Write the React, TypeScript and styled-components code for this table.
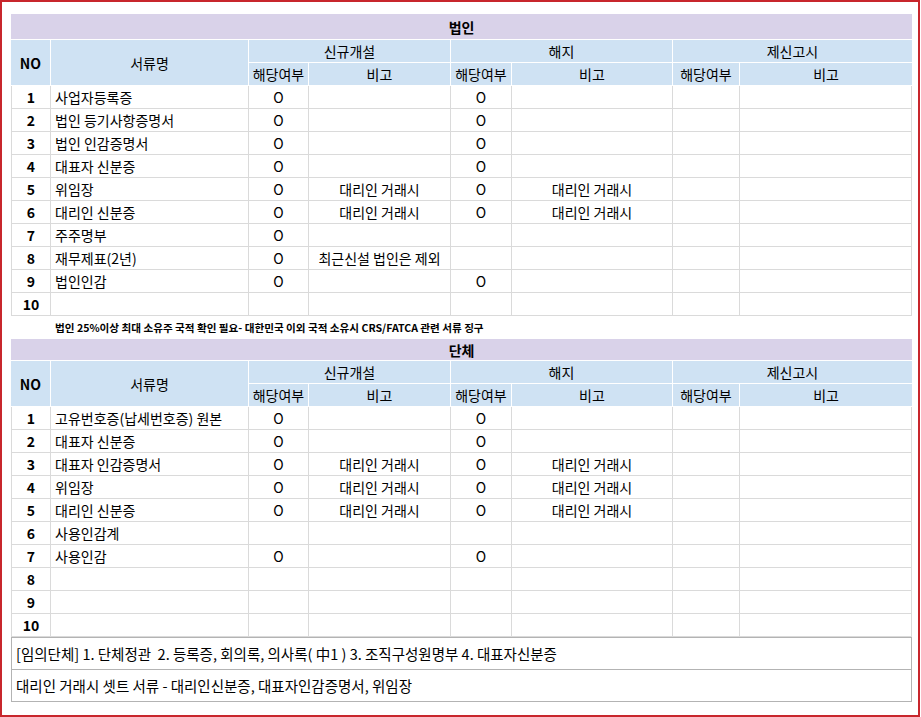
import React from 'react'
import styled, { createGlobalStyle } from 'styled-components'

const GlobalStyle = createGlobalStyle`
  html, body {
    margin: 0;
    padding: 0;
    background: #fff;
  }
  body {
    font-family: "Noto Sans CJK KR", "Noto Sans", sans-serif;
    color: #000;
  }
`

type Row = {
  no: number
  name?: string
  newYes?: boolean
  newNote?: string
  closeYes?: boolean
  closeNote?: string
}

const corpRows: Row[] = [
  { no: 1, name: '사업자등록증', newYes: true, closeYes: true },
  { no: 2, name: '법인 등기사항증명서', newYes: true, closeYes: true },
  { no: 3, name: '법인 인감증명서', newYes: true, closeYes: true },
  { no: 4, name: '대표자 신분증', newYes: true, closeYes: true },
  { no: 5, name: '위임장', newYes: true, newNote: '대리인 거래시', closeYes: true, closeNote: '대리인 거래시' },
  { no: 6, name: '대리인 신분증', newYes: true, newNote: '대리인 거래시', closeYes: true, closeNote: '대리인 거래시' },
  { no: 7, name: '주주명부', newYes: true },
  { no: 8, name: '재무제표(2년)', newYes: true, newNote: '최근신설 법인은 제외' },
  { no: 9, name: '법인인감', newYes: true, closeYes: true },
  { no: 10 },
]

const groupRows: Row[] = [
  { no: 1, name: '고유번호증(납세번호증) 원본', newYes: true, closeYes: true },
  { no: 2, name: '대표자 신분증', newYes: true, closeYes: true },
  { no: 3, name: '대표자 인감증명서', newYes: true, newNote: '대리인 거래시', closeYes: true, closeNote: '대리인 거래시' },
  { no: 4, name: '위임장', newYes: true, newNote: '대리인 거래시', closeYes: true, closeNote: '대리인 거래시' },
  { no: 5, name: '대리인 신분증', newYes: true, newNote: '대리인 거래시', closeYes: true, closeNote: '대리인 거래시' },
  { no: 6, name: '사용인감계' },
  { no: 7, name: '사용인감', newYes: true, closeYes: true },
  { no: 8 },
  { no: 9 },
  { no: 10 },
]

const colWidths = [40, 198, 60, 142, 61, 161, 67, 172]

export default function App() {
  return (
    <>
      <GlobalStyle />
      <Frame>
        <DocTable title="법인" titleHeight={26} rows={corpRows} />
        <Note>
          법인 25%이상 최대 소유주 국적 확인 필요- 대한민국 이외 국적 소유시 CRS/FATCA 관련 서류 징구
        </Note>
        <DocTable title="단체" titleHeight={22} rows={groupRows} />
        <InfoBox>
          <InfoLine>[임의단체] 1. 단체정관&nbsp; 2. 등록증, 회의록, 의사록( 中1 ) 3. 조직구성원명부 4. 대표자신분증</InfoLine>
          <InfoLine>대리인 거래시 셋트 서류 - 대리인신분증, 대표자인감증명서, 위임장</InfoLine>
        </InfoBox>
      </Frame>
    </>
  )
}

const DocTable = ({ title, titleHeight, rows }: { title: string; titleHeight: number; rows: Row[] }) => (
  <Table>
    <colgroup>
      {colWidths.map((w, i) => (
        <col key={i} style={{ width: w }} />
      ))}
    </colgroup>
    <thead>
      <tr>
        <TitleCell colSpan={8} $h={titleHeight}>
          {title}
        </TitleCell>
      </tr>
      <tr>
        <HeadCell rowSpan={2} $bold>
          NO
        </HeadCell>
        <HeadCell rowSpan={2}>서류명</HeadCell>
        <HeadCell colSpan={2}>신규개설</HeadCell>
        <HeadCell colSpan={2}>해지</HeadCell>
        <HeadCell colSpan={2}>제신고시</HeadCell>
      </tr>
      <tr>
        <HeadCell>해당여부</HeadCell>
        <HeadCell>비고</HeadCell>
        <HeadCell>해당여부</HeadCell>
        <HeadCell>비고</HeadCell>
        <HeadCell>해당여부</HeadCell>
        <HeadCell>비고</HeadCell>
      </tr>
    </thead>
    <tbody>
      {rows.map((r) => (
        <tr key={r.no}>
          <Cell $bold>{r.no}</Cell>
          <Cell $left>{r.name}</Cell>
          <Cell>{r.newYes ? 'O' : ''}</Cell>
          <Cell>{r.newNote}</Cell>
          <Cell>{r.closeYes ? 'O' : ''}</Cell>
          <Cell>{r.closeNote}</Cell>
          <Cell />
          <Cell />
        </tr>
      ))}
    </tbody>
  </Table>
)

const Frame = styled.div`
  width: 920px;
  height: 717px;
  box-sizing: border-box;
  border: 2px solid #c8262c;
  padding: 12px 0 0 9px;
  overflow: hidden;
`

const Table = styled.table`
  width: 901px;
  table-layout: fixed;
  border-collapse: separate;
  border-spacing: 0;
  font-size: 14px;
  line-height: 1;
`

const TitleCell = styled.th<{ $h: number }>`
  height: ${(p) => p.$h}px;
  box-sizing: border-box;
  padding: 0;
  background: #d9d2e9;
  font-weight: 700;
  text-align: center;
  border-bottom: 1px solid #fff;
`

const HeadCell = styled.th<{ $bold?: boolean }>`
  height: 23px;
  box-sizing: border-box;
  padding: 0;
  background: #cfe2f3;
  border-bottom: 1px solid #fff;
  border-right: 1px solid #fff;
  font-weight: ${(p) => (p.$bold ? 700 : 400)};
  text-align: center;
  white-space: nowrap;
  &:last-child {
    border-right: 0;
  }
`

const Cell = styled.td<{ $bold?: boolean; $left?: boolean }>`
  height: 23px;
  box-sizing: border-box;
  padding: 0 4px;
  border-right: 1px solid #dadada;
  border-bottom: 1px solid #dadada;
  text-align: ${(p) => (p.$left ? 'left' : 'center')};
  font-weight: ${(p) => (p.$bold ? 700 : 400)};
  white-space: nowrap;
  overflow: hidden;
  &:first-child {
    border-left: 1px solid #dadada;
  }
`

const Note = styled.div`
  height: 23px;
  padding-left: 44px;
  display: flex;
  align-items: center;
  font-size: 10.6px;
  font-weight: 700;
  white-space: nowrap;
`

const InfoBox = styled.div`
  width: 901px;
  box-sizing: border-box;
  border: 1px solid #b3b3b3;
  border-top: 0;
  display: flex;
  flex-direction: column;
`

const InfoLine = styled.div`
  height: 32px;
  box-sizing: border-box;
  padding-left: 4px;
  display: flex;
  align-items: center;
  font-size: 14.5px;
  border-top: 1px solid #b3b3b3;
  white-space: nowrap;
`
